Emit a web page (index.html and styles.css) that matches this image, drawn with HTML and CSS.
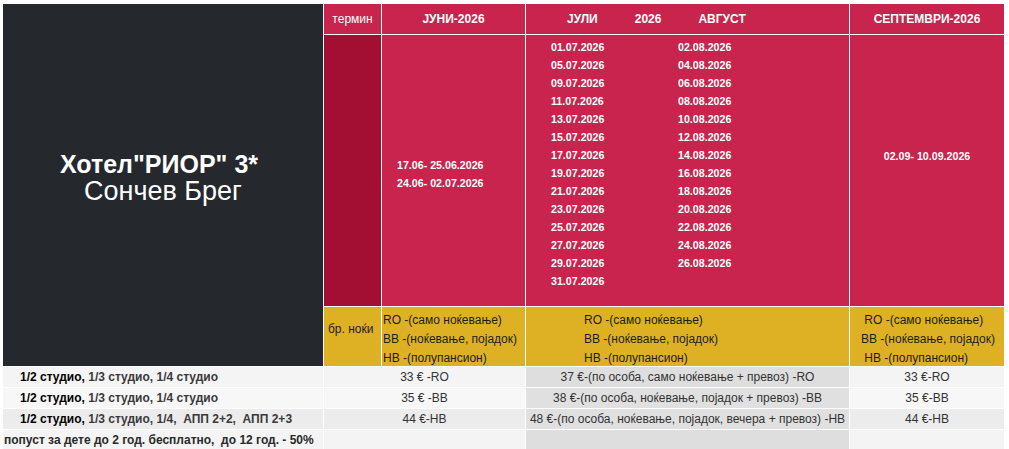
FILE: index.html
```html
<!DOCTYPE html>
<html lang="mk">
<head>
<meta charset="utf-8">
<title>Хотел РИОР 3* Сончев Брег</title>
<link rel="stylesheet" href="styles.css">
</head>
<body>
<table class="price">
  <colgroup>
    <col class="c-hotel">
    <col class="c-term">
    <col class="c-june">
    <col class="c-julaug">
    <col class="c-sept">
  </colgroup>
  <tr class="r-head">
    <td class="hotel" rowspan="3">
      <div class="hotel-name">Хотел"РИОР" 3*</div>
      <div class="hotel-place">Сончев Брег</div>
    </td>
    <td class="head term-head">термин</td>
    <td class="head bold">ЈУНИ-2026</td>
    <td class="head bold"><div class="months"><span>ЈУЛИ</span><span>2026</span><span>АВГУСТ</span></div></td>
    <td class="head bold">СЕПТЕМВРИ-2026</td>
  </tr>
  <tr class="r-dates">
    <td class="term-dark"></td>
    <td class="dates june">17.06- 25.06.2026<br>24.06- 02.07.2026</td>
    <td class="dates julaug">
      <div class="date-grid">
        <div>01.07.2026<br>05.07.2026<br>09.07.2026<br>11.07.2026<br>13.07.2026<br>15.07.2026<br>17.07.2026<br>19.07.2026<br>21.07.2026<br>23.07.2026<br>25.07.2026<br>27.07.2026<br>29.07.2026<br>31.07.2026</div>
        <div>02.08.2026<br>04.08.2026<br>06.08.2026<br>08.08.2026<br>10.08.2026<br>12.08.2026<br>14.08.2026<br>16.08.2026<br>18.08.2026<br>20.08.2026<br>22.08.2026<br>24.08.2026<br>26.08.2026</div>
      </div>
    </td>
    <td class="dates sept">02.09- 10.09.2026</td>
  </tr>
  <tr class="r-board">
    <td class="board nights"><div class="board-in nights-in">бр. ноќи</div></td>
    <td class="board b-june"><div class="board-in">RO -(само ноќевање)<br>BB -(ноќевање, појадок)<br>HB -(полупансион)</div></td>
    <td class="board b-julaug"><div class="board-in">RO -(само ноќевање)<br>BB -(ноќевање, појадок)<br>HB -(полупансион)</div></td>
    <td class="board b-sept"><div class="board-in">&nbsp;RO -(само ноќевање)<br>BB -(ноќевање, појадок)<br>&nbsp;HB -(полупансион)</div></td>
  </tr>
  <tr class="r-price r1">
    <td class="room"><b>1/2 студио,</b> 1/3 студио, 1/4 студио</td>
    <td class="pr" colspan="2">33 € -RO</td>
    <td class="pr mid">37 €-(по особа, само ноќевање + превоз) -RO</td>
    <td class="pr last">33 €-RO</td>
  </tr>
  <tr class="r-price r2">
    <td class="room"><b>1/2 студио,</b> 1/3 студио, 1/4 студио</td>
    <td class="pr" colspan="2">35 € -BB</td>
    <td class="pr mid">38 €-(по особа, ноќевање, појадок + превоз) -BB</td>
    <td class="pr last">35 €-BB</td>
  </tr>
  <tr class="r-price r3">
    <td class="room"><b>1/2 студио,</b> 1/3 студио, 1/4,&nbsp; АПП 2+2,&nbsp; АПП 2+3</td>
    <td class="pr" colspan="2">44 €-HB</td>
    <td class="pr mid">48 €-(по особа, ноќевање, појадок, вечера + превоз) -HB</td>
    <td class="pr last">44 €-HB</td>
  </tr>
  <tr class="r-price r4">
    <td class="note">попуст за дете до 2 год. бесплатно,&nbsp; до 12 год. - 50%</td>
    <td class="pr" colspan="2"></td>
    <td class="pr mid"></td>
    <td class="pr last"></td>
  </tr>
</table>
</body>
</html>
```

FILE: styles.css
```css
html, body {
  margin: 0;
  padding: 0;
  background: #ffffff;
}

body {
  padding: 3px 0 0 2px;
  font-family: "Liberation Sans", Arial, sans-serif;
}

.price {
  border-collapse: collapse;
  table-layout: fixed;
  width: 1002px;
  font-size: 12px;
}

.c-hotel { width: 321px; }
.c-term { width: 58px; }
.c-june { width: 144px; }
.c-julaug { width: 324px; }
.c-sept { width: 155px; }

.price td {
  border: 1px solid #ffffff;
  padding: 0;
  overflow: hidden;
  white-space: nowrap;
}

/* hotel cell */
.hotel {
  background: #25282d;
  color: #ffffff;
  text-align: center;
  vertical-align: middle;
  padding-bottom: 14px !important;
}

.hotel-name {
  font-weight: bold;
  font-size: 25px;
  line-height: 27px;
  padding-right: 8px;
}

.hotel-place {
  font-size: 27px;
  line-height: 27px;
}

/* header row */
.r-head { height: 31px; }

.head {
  background: #c8244d;
  color: #ffffff;
  text-align: center;
  vertical-align: middle;
}

.term-head {
  font-weight: normal;
}

.bold { font-weight: bold; }

.months {
  display: flex;
  gap: 37px;
  padding-left: 41px;
}

/* dates row */
.r-dates { height: 272px; }

.term-dark {
  background: #a30f33;
}

.dates {
  background: #c8244d;
  color: #ffffff;
  font-weight: bold;
  font-size: 10.67px;
  line-height: 18px;
}

.june {
  vertical-align: middle;
  padding-left: 15px !important;
  padding-top: 7px !important;
}

.julaug {
  vertical-align: top;
  padding-top: 3px !important;
}

.date-grid {
  display: grid;
  grid-template-columns: 127px auto;
  padding-left: 25px;
}

.sept {
  text-align: center;
  vertical-align: middle;
  padding-bottom: 30px !important;
}

/* board row */
.r-board { height: 60px; }

.board {
  background: #deb023;
  color: #1e1e1e;
  vertical-align: top;
}

.board-in {
  line-height: 19px;
  height: 55px;
  padding-top: 4px;
}

.nights-in {
  padding-top: 13px;
  height: 46px;
}

.nights {
  padding-left: 4px !important;
}

.b-june {
  padding-left: 1px !important;
}

.b-julaug {
  padding-left: 58px !important;
}

.b-sept {
  padding-left: 11px !important;
}

/* price rows */
.r-price { height: 21px; }

.pr {
  text-align: center;
  color: #333333;
  background: #f4f4f4;
}

.pr.mid {
  background: #dedede;
}

.r2 .pr { background: #f7f7f7; }
.r2 .pr.mid { background: #e0e0e0; }
.r3 .pr { background: #ececec; }
.r3 .pr.mid { background: #e0e0e0; }
.r3 .pr.last { background: #ececec; }

.room, .note {
  font-weight: bold;
  color: #3a3a3a;
  background: #f4f4f4;
}

.r2 .room { background: #f7f7f7; }
.r3 .room { background: #ececec; }

.room {
  padding-left: 17px !important;
}

.room b {
  color: #000000;
}

.note {
  padding-left: 1px !important;
  color: #2a2a2a;
}
```
